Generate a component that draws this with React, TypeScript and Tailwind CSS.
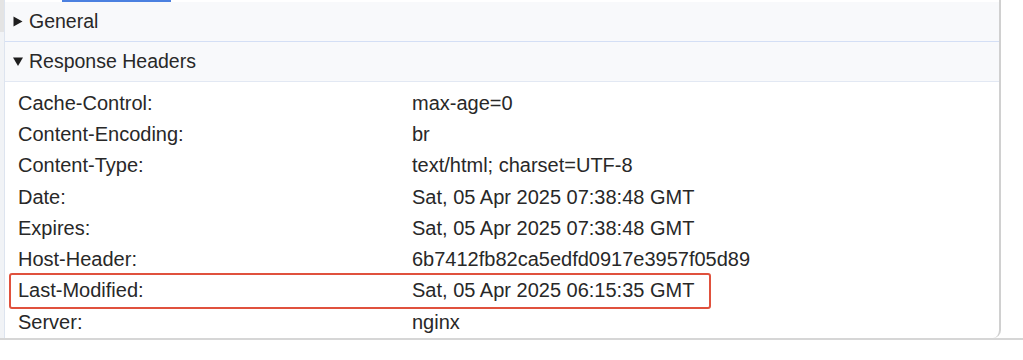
import React from 'react';

const headers: { name: string; value: string; highlight?: boolean }[] = [
  { name: 'Cache-Control:', value: 'max-age=0' },
  { name: 'Content-Encoding:', value: 'br' },
  { name: 'Content-Type:', value: 'text/html; charset=UTF-8' },
  { name: 'Date:', value: 'Sat, 05 Apr 2025 07:38:48 GMT' },
  { name: 'Expires:', value: 'Sat, 05 Apr 2025 07:38:48 GMT' },
  { name: 'Host-Header:', value: '6b7412fb82ca5edfd0917e3957f05d89' },
  { name: 'Last-Modified:', value: 'Sat, 05 Apr 2025 06:15:35 GMT', highlight: true },
  { name: 'Server:', value: 'nginx' },
];

const App: React.FC = () => {
  return (
    <div className="w-[1023px] h-[360px] bg-white font-['Liberation_Sans',Arial,sans-serif] text-[20px] text-[#282828] overflow-hidden">
      <div className="flex h-[340px] border-b-2 border-[#d6d6d6]">
        {/* left gutter of the devtools pane */}
        <div className="w-[4px] flex flex-col">
          <div className="h-[32px] bg-[#e4e4e4]" />
          <div className="flex-1 bg-[#f1f3f6]" />
        </div>

        <div className="w-[997px] flex flex-col border-l border-[#dde4ef] border-r-2 border-r-[#d0d0d0] rounded-br-[8px] bg-white">
          {/* active tab indicator */}
          <div className="h-[2px] flex">
            <div className="ml-[57px] w-[109px] bg-[#4b80e0]" />
          </div>

          {/* General */}
          <div className="h-[40px] flex items-center gap-[6px] pl-[8px] text-[19.5px] bg-[#f8f9fb] border-b border-[#d4dff5]">
            <svg width="10" height="11" viewBox="0 0 10 11" className="shrink-0">
              <path d="M0.5 0.5 L9.5 5.5 L0.5 10.5 Z" fill="#1e1e1e" />
            </svg>
            <span>General</span>
          </div>

          {/* Response Headers */}
          <div className="h-[40px] flex items-center gap-[6px] pl-[8px] text-[19.5px] bg-[#f8f9fb] border-b border-[#e2e8f3]">
            <svg width="10" height="9" viewBox="0 0 10 9" className="shrink-0">
              <path d="M0 0.5 L10 0.5 L5 9 Z" fill="#1e1e1e" />
            </svg>
            <span>Response Headers</span>
          </div>

          <div className="flex flex-col pt-[5px]">
            {headers.map((h) => (
              <div key={h.name} className="relative h-[31.3px] grid grid-cols-[394px_1fr] items-center pl-[13px]">
                <span className="whitespace-nowrap">{h.name}</span>
                <span className="whitespace-nowrap">{h.value}</span>
                {h.highlight && (
                  <div className="absolute left-[4px] w-[702px] -top-[2px] -bottom-[3px] border-2 border-[#e0513d] rounded-[3px]" />
                )}
              </div>
            ))}
          </div>
        </div>
      </div>
    </div>
  );
};

export default App;
